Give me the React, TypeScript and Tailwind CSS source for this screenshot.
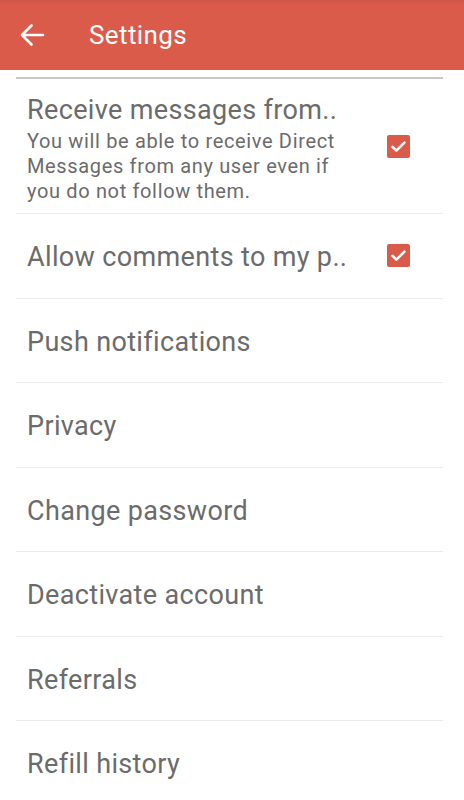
import { ReactNode } from "react";

const items = [
  "Push notifications",
  "Privacy",
  "Change password",
  "Deactivate account",
  "Referrals",
  "Refill history",
];

function Check() {
  return (
    <div className="flex h-[23px] w-[23px] items-center justify-center rounded-[2px] bg-[#db5b4b]">
      <svg width="19" height="19" viewBox="0 0 24 24" fill="none">
        <path
          d="M4.5 12.5l4.8 4.8L19.5 7"
          stroke="#fff"
          strokeWidth="3.2"
          strokeLinecap="round"
          strokeLinejoin="round"
        />
      </svg>
    </div>
  );
}

function Row({ children, right }: { children: ReactNode; right?: ReactNode }) {
  return (
    <div className="flex h-[84.5px] items-center border-b border-[#ececec] pl-[11px] pr-[33px]">
      <div className="min-w-0 flex-1 pt-[3px]">{children}</div>
      {right}
    </div>
  );
}

export default function App() {
  return (
    <div
      className="h-[800px] w-[464px] overflow-hidden bg-white"
      style={{ fontFamily: "Roboto, 'Noto Sans', sans-serif" }}
    >
      <div className="flex h-[70px] items-center bg-[#db5b4b] bg-gradient-to-b from-[#cf5646] to-[#db5b4b] to-[8%]">
        <div className="ml-[19px] flex h-[26px] w-[26px] items-center justify-center">
          <svg width="26" height="26" viewBox="0 0 26 26" fill="none">
            <path
              d="M24 13H3.5M12.5 3.5L3 13l9.5 9.5"
              stroke="#fff"
              strokeWidth="2.6"
              strokeLinecap="round"
              strokeLinejoin="round"
            />
          </svg>
        </div>
        <h1 className="ml-[44px] text-[26px] leading-none tracking-[0.4px] text-white">
          Settings
        </h1>
      </div>

      <div className="ml-4 mr-[21px] mt-[7px] border-t-2 border-[#c8c8c8]">
        <div className="flex h-[135px] items-center border-b border-[#ececec] pl-[11px] pr-[33px]">
          <div className="w-[330px] pt-[6px]">
            <p className="truncate text-[27px] leading-[32px] tracking-[0.35px] text-[#6b6b6b]">
              Receive messages from..
            </p>
            <p className="mt-[3px] text-[20px] leading-[25px] tracking-[0.65px] text-[#6b6b6b]">
              You will be able to receive Direct Messages from any user even if you do not
              follow them.
            </p>
          </div>
          <div className="ml-auto">
            <Check />
          </div>
        </div>

        <Row right={<Check />}>
          <p className="text-[27px] tracking-[0.35px] text-[#6b6b6b]">Allow comments to my p..</p>
        </Row>

        {items.map((t) => (
          <Row key={t}>
            <p className="text-[27px] tracking-[0.35px] text-[#6b6b6b]">{t}</p>
          </Row>
        ))}
      </div>
    </div>
  );
}
